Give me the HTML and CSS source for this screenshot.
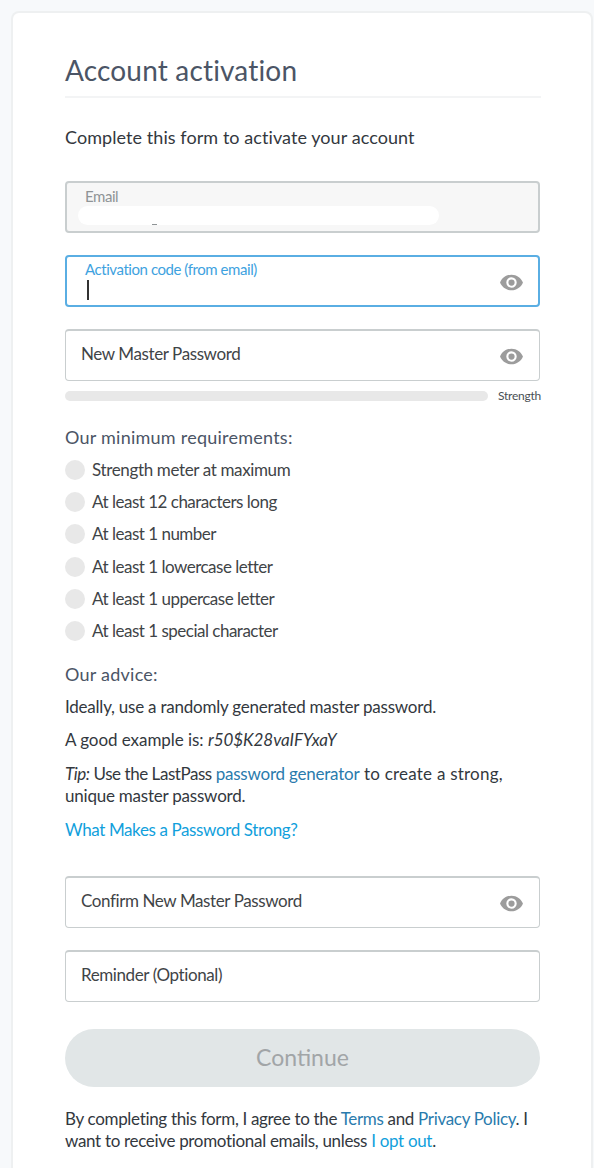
FILE: index.html
```html
<!DOCTYPE html>
<html lang="en">
<head>
<meta charset="utf-8">
<title>Account activation</title>
<link rel="stylesheet" href="styles.css">
</head>
<body>
<svg class="defs" width="0" height="0" aria-hidden="true"><symbol id="eye" viewBox="0 0 24 24"><path fill-rule="evenodd" d="M12 4.5C7 4.5 2.7 7.6 1 12c1.700 4.400 6 7.500 11 7.500s9.300-3.100 11-7.500c-1.700-4.400-6-7.500-11-7.500zM12 17a5 5 0 1 1 0-10 5 5 0 0 1 0 10zm0-8a3 3 0 1 0 0 6 3 3 0 0 0 0-6z"/></symbol></svg>
<main class="card">
  <header class="head"><h1>Account activation</h1></header>
  <p class="intro">Complete this form to activate your account</p>
  <div class="field disabled">
    <span class="float">Email</span>
    <span class="mask"></span>
    <span class="speck"></span>
  </div>
  <div class="field focus">
    <span class="float">Activation code (from email)</span>
    <span class="caret"></span>
    <svg class="eye"><use href="#eye"/></svg>
  </div>
  <div class="field">
    <span class="label">New Master Password</span>
    <svg class="eye"><use href="#eye"/></svg>
  </div>
  <div class="strength"><div class="bar"></div><span>Strength</span></div>
  <h2 class="req-title">Our minimum requirements:</h2>
  <ul class="reqs">
    <li>Strength meter at maximum</li>
    <li>At least 12 characters long</li>
    <li>At least 1 number</li>
    <li>At least 1 lowercase letter</li>
    <li>At least 1 uppercase letter</li>
    <li>At least 1 special character</li>
  </ul>
  <h2 class="advice-title">Our advice:</h2>
  <p class="advice">Ideally, use a randomly generated master password.</p>
  <p class="advice example">A good example is: <em>r50$K28vaIFYxaY</em></p>
  <p class="advice tip"><span class="tip-lead"><em>Tip:</em> Use the LastPass </span><a class="dark" href="#">password generator</a><span class="tip-tail"> to create a strong,</span> unique master password.</p>
  <a class="strong" href="#">What Makes a Password Strong?</a>
  <div class="field confirm">
    <span class="label">Confirm New Master Password</span>
    <svg class="eye"><use href="#eye"/></svg>
  </div>
  <div class="field">
    <span class="label">Reminder (Optional)</span>
  </div>
  <button class="continue" type="button">Continue</button>
  <p class="legal">By completing this form, I agree to the <a class="dark" href="#">Terms</a> and <a class="dark" href="#">Privacy Policy</a>. I want to receive promotional emails, unless <a href="#">I opt out</a>.</p>
</main>
</body>
</html>
```
FILE: styles.css
```css
* { box-sizing: border-box; }
html, body { margin: 0; padding: 0; }
body {
  width: 594px;
  height: 1168px;
  overflow: hidden;
  background: #f7f9fb;
  font-family: Lato, "Liberation Sans", sans-serif;
  color: #3c4249;
  padding: 11px 0 0 11px;
}
.defs { position: absolute; }
.card {
  width: 582px;
  height: 1157px;
  background: #fff;
  border: 2px solid #eef0f1;
  border-bottom: 0;
  border-radius: 8px 8px 0 0;
  padding: 0 51px 0 52px;
}
.head { height: 85px; margin-right: -1px; border-bottom: 2px solid #f3f4f5; padding-top: 39px; }
h1 { margin: 0; font-size: 28px; line-height: 36px; font-weight: 400; color: #4b5566; letter-spacing: .17px; }
.intro { margin: 28px 0 0; font-size: 18px; line-height: 22px; color: #33383e; letter-spacing: .07px; }
.field {
  position: relative;
  height: 52px;
  margin-top: 22px;
  border: 1px solid #c9cecf;
  border-top-width: 2px;
  border-radius: 4px;
  background: #fff;
}
.intro + .field { margin-top: 33px; }
.disabled { background: #f7f7f7; border-width: 2px; }
.focus { border: 2px solid #5aaee3; }
.float { position: absolute; left: 18px; top: 4px; font-size: 15px; line-height: 18px; letter-spacing: -.44px; color: #8f9496; }
.focus .float { top: 3px; color: #3ea2e0; }
.mask { position: absolute; left: 11px; top: 23px; width: 361px; height: 19px; border-radius: 10px; background: #fff; }
.speck { position: absolute; left: 85px; top: 41px; width: 5px; height: 1px; background: #8f9496; }
.caret { position: absolute; left: 20px; top: 23px; width: 1.5px; height: 20px; background: #333; }
.label { position: absolute; left: 15px; top: 12px; font-size: 17px; line-height: 22px; letter-spacing: -.4px; color: #3f4447; }
.eye { position: absolute; right: 15px; top: 13px; width: 25px; height: 25px; fill: #9c9c9c; }
.focus .eye { right: 14px; }
.strength { display: flex; align-items: center; margin-top: 9px; height: 11px; }
.bar { flex: none; width: 423px; height: 10px; border-radius: 5px; background: #e8e8e8; }
.strength span { margin-left: 10px; font-size: 12px; line-height: 12px; letter-spacing: -.25px; color: #4a4f55; white-space: nowrap; }
h2 { margin: 0; font-size: 18px; line-height: 22px; font-weight: 400; color: #4b5566; letter-spacing: .24px; }
.req-title { margin-top: 25px; }
.reqs { list-style: none; margin: 10.5px 0 0; padding: 0; }
.reqs li { position: relative; height: 32.4px; padding-left: 27px; font-size: 17px; line-height: 22px; letter-spacing: -.5px; color: #3f4447; }
.reqs li:first-child { letter-spacing: -.36px; }
.reqs li::before { content: ""; position: absolute; left: 0; top: 1px; width: 20px; height: 20px; border-radius: 50%; background: #e8e8e8; }
.advice-title { margin-top: 10.5px; }
.advice { margin: 11px 0 0; font-size: 17px; line-height: 22px; letter-spacing: -.22px; color: #33383e; }
.example { letter-spacing: -.05px; }
.tip { margin-top: 12px; width: 450px; }
.tip-lead { letter-spacing: -.45px; }
.tip-tail { letter-spacing: .22px; }
a { color: #11a0dc; text-decoration: none; }
a.dark { color: #2a7bad; }
.strong { display: block; margin-top: 12px; font-size: 17px; line-height: 22px; letter-spacing: -.38px; }
.confirm { margin-top: 35px; }
.continue {
  display: block;
  width: 475px;
  height: 58px;
  margin-top: 27px;
  border: 0;
  border-radius: 29px;
  background: #e1e6e7;
  color: #a1a5a7;
  font: 400 23px/56px Lato, "Liberation Sans", sans-serif;
  padding: 0 0 2px;
}
.legal { margin: 21px 0 0; font-size: 17px; line-height: 22px; letter-spacing: -.32px; color: #33383e; }
```
